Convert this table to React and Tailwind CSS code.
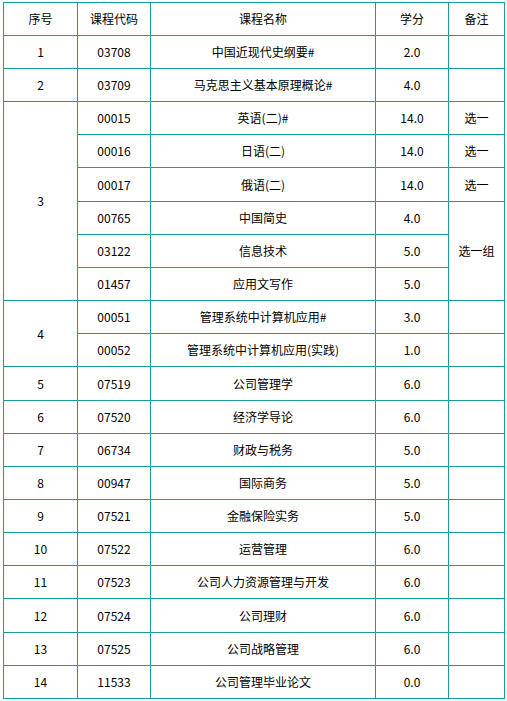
const rows = [
  { no: '1', code: '03708', name: '中国近现代史纲要#', score: '2.0', h: 'h-[33px]' },
  { no: '2', code: '03709', name: '马克思主义基本原理概论#', score: '4.0', h: 'h-[33px]' },
  { no: '3', span: 6, code: '00015', name: '英语(二)#', score: '14.0', note: '选一', h: 'h-[33px]' },
  { code: '00016', name: '日语(二)', score: '14.0', note: '选一', h: 'h-[33px]' },
  { code: '00017', name: '俄语(二)', score: '14.0', note: '选一', h: 'h-[34px]' },
  { code: '00765', name: '中国简史', score: '4.0', note: '选一组', noteSpan: 3, h: 'h-[33px]' },
  { code: '03122', name: '信息技术', score: '5.0', skipNote: true, h: 'h-[33px]' },
  { code: '01457', name: '应用文写作', score: '5.0', skipNote: true, h: 'h-[33px]' },
  { no: '4', span: 2, code: '00051', name: '管理系统中计算机应用#', score: '3.0', h: 'h-[33px]' },
  { code: '00052', name: '管理系统中计算机应用(实践)', score: '1.0', h: 'h-[33px]' },
  { no: '5', code: '07519', name: '公司管理学', score: '6.0', h: 'h-[34px]' },
  { no: '6', code: '07520', name: '经济学导论', score: '6.0', h: 'h-[33px]' },
  { no: '7', code: '06734', name: '财政与税务', score: '5.0', h: 'h-[33px]' },
  { no: '8', code: '00947', name: '国际商务', score: '5.0', h: 'h-[33px]' },
  { no: '9', code: '07521', name: '金融保险实务', score: '5.0', h: 'h-[33px]' },
  { no: '10', code: '07522', name: '运营管理', score: '6.0', h: 'h-[33px]' },
  { no: '11', code: '07523', name: '公司人力资源管理与开发', score: '6.0', h: 'h-[33px]' },
  { no: '12', code: '07524', name: '公司理财', score: '6.0', h: 'h-[34px]' },
  { no: '13', code: '07525', name: '公司战略管理', score: '6.0', h: 'h-[33px]' },
  { no: '14', code: '11533', name: '公司管理毕业论文', score: '0.0', h: 'h-[33px]' },
]

const cell = 'border border-[#169c9c] text-center align-middle p-0'

export default function App() {
  return (
    <div className="bg-white min-h-[701px] pl-[3px] pt-[2px] text-[12px] text-black font-['Microsoft_YaHei','Noto_Sans_CJK_SC',sans-serif]">
      <table className="table-fixed border-collapse w-[501px]">
        <colgroup>
          <col className="w-[74px]" />
          <col className="w-[73px]" />
          <col className="w-[225px]" />
          <col className="w-[73px]" />
          <col className="w-[56px]" />
        </colgroup>
        <thead>
          <tr className="h-[33px]">
            <th className={cell + ' font-normal'}>序号</th>
            <th className={cell + ' font-normal'}>课程代码</th>
            <th className={cell + ' font-normal'}>课程名称</th>
            <th className={cell + ' font-normal'}>学分</th>
            <th className={cell + ' font-normal'}>备注</th>
          </tr>
        </thead>
        <tbody>
          {rows.map((r) => (
            <tr key={r.code} className={r.h}>
              {r.no && (
                <td className={cell} rowSpan={r.span || 1}>
                  {r.no}
                </td>
              )}
              <td className={cell}>{r.code}</td>
              <td className={cell}>{r.name}</td>
              <td className={cell}>{r.score}</td>
              {!r.skipNote && (
                <td className={cell} rowSpan={r.noteSpan || 1}>
                  {r.note}
                </td>
              )}
            </tr>
          ))}
        </tbody>
      </table>
    </div>
  )
}
